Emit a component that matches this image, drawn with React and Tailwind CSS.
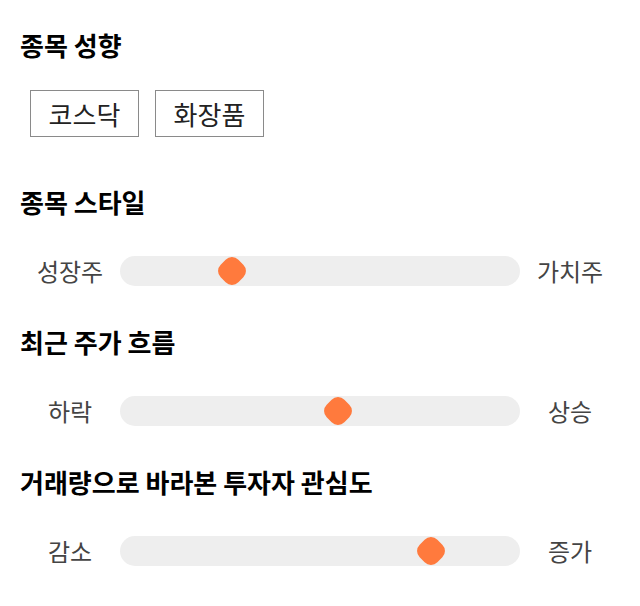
export default function App() {
  const font = { fontFamily: '"Noto Sans CJK KR", "Noto Sans", sans-serif' };
  const sliders = [
    { title: "종목 스타일", left: "성장주", right: "가치주", pos: 112, mt: "mt-[47px]" },
    { title: "최근 주가 흐름", left: "하락", right: "상승", pos: 218, mt: "mt-[38px]" },
    { title: "거래량으로 바라본 투자자 관심도", left: "감소", right: "증가", pos: 311, mt: "mt-[38px]" },
  ];
  return (
    <div className="w-[640px] h-[606px] bg-white px-5 pt-[27px]" style={font}>
      <h2 className="text-[26px] font-bold text-black leading-[36px]">종목 성향</h2>
      <div className="flex gap-4 mt-[27px] pl-[10px]">
        {["코스닥", "화장품"].map((t) => (
          <div key={t} className="w-[109px] h-[47px] border border-[#8a8a8a] flex items-center justify-center text-[26px] text-[#222]">
            {t}
          </div>
        ))}
      </div>
      {sliders.map((s) => (
        <div key={s.title} className={s.mt}>
          <h2 className="text-[26px] font-bold text-black leading-[36px]">{s.title}</h2>
          <div className="flex items-center mt-[36px] h-[30px]">
            <div className="w-[100px] text-center text-[24px] text-[#444]">{s.left}</div>
            <div className="relative flex-1 h-[30px] rounded-full bg-[#eeeeee]">
              <div
                className="absolute top-1/2 w-[25px] h-[25px] rounded-[9px] bg-[#ff7a3d]"
                style={{ left: s.pos, transform: "translate(-50%, -50%) rotate(45deg)" }}
              />
            </div>
            <div className="w-[100px] text-center text-[24px] text-[#444]">{s.right}</div>
          </div>
        </div>
      ))}
    </div>
  );
}
